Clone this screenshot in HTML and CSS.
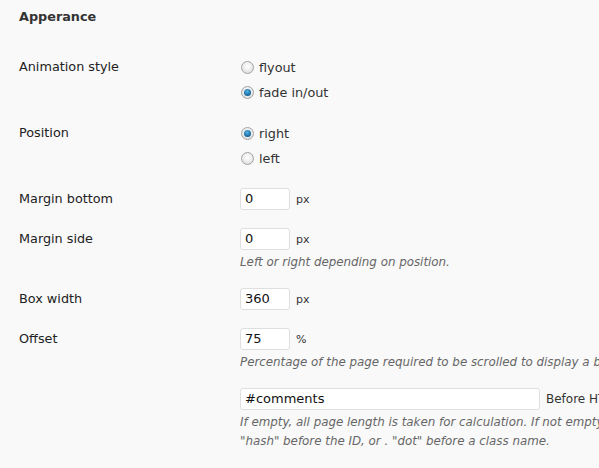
FILE: index.html
```html
<!DOCTYPE html>
<html>
<head>
<meta charset="utf-8">
<link rel="stylesheet" href="styles.css">
</head>
<body>
<div class="page">
  <h3 class="title">Apperance</h3>
  <div class="form">
    <div class="row row-radio">
      <div class="label">Animation style</div>
      <div class="field">
        <label class="radio-line"><span class="radio"></span>flyout</label>
        <label class="radio-line"><span class="radio checked"></span>fade in/out</label>
      </div>
    </div>
    <div class="row row-radio row-pos">
      <div class="label">Position</div>
      <div class="field">
        <label class="radio-line"><span class="radio checked"></span>right</label>
        <label class="radio-line"><span class="radio"></span>left</label>
      </div>
    </div>
    <div class="row row-mb">
      <div class="label">Margin bottom</div>
      <div class="field">
        <div class="input-line"><span class="input small">0</span><span class="unit">px</span></div>
      </div>
    </div>
    <div class="row">
      <div class="label">Margin side</div>
      <div class="field">
        <div class="input-line"><span class="input small">0</span><span class="unit">px</span></div>
        <p class="desc">Left or right depending on position.</p>
      </div>
    </div>
    <div class="row row-bw">
      <div class="label">Box width</div>
      <div class="field">
        <div class="input-line"><span class="input small">360</span><span class="unit">px</span></div>
      </div>
    </div>
    <div class="row">
      <div class="label">Offset</div>
      <div class="field">
        <div class="input-line"><span class="input small">75</span><span class="unit">%</span></div>
        <p class="desc nowrap">Percentage of the page required to be scrolled to display a box.</p>
      </div>
    </div>
    <div class="row row-last">
      <div class="label"></div>
      <div class="field">
        <div class="input-line"><span class="input wide">#comments</span><span class="unit after">Before HTML element.</span></div>
        <p class="desc nowrap">If empty, all page length is taken for calculation. If not empty, use # "hash"</p>
        <p class="desc desc2">"hash" before the ID, or . "dot" before a class name.</p>
      </div>
    </div>
  </div>
</div>
</body>
</html>
```
FILE: styles.css
```css
html, body {
  margin: 0;
  padding: 0;
  background: #f9f9f9;
  overflow: hidden;
}
body {
  width: 599px;
  height: 468px;
  font-family: "DejaVu Sans", Verdana, sans-serif;
  font-size: 12.8px;
  color: #333;
}
.page {
  padding: 0 0 0 19px;
}
.title {
  margin: 0;
  padding-top: 8px;
  height: 24px;
  line-height: 18px;
  font-size: 12.8px;
  font-weight: bold;
  color: #333;
}
.form {
  padding-top: 15px;
}
.row {
  display: flex;
  padding: 8px 0;
}
.row-pos {
  padding-top: 9px;
  padding-bottom: 9px;
}
.row-bw {
  padding-top: 7px;
}
.row-last {
  padding-top: 7px;
}
.label {
  width: 221px;
  flex: none;
  line-height: 24px;
  color: #222;
}
.field {
  flex: 1;
  min-width: 0;
  white-space: nowrap;
}
.radio-line {
  display: flex;
  align-items: center;
  height: 24px;
  color: #333;
}
.radio-line + .radio-line {
  margin-top: 1px;
}
.radio {
  flex: none;
  width: 11px;
  height: 11px;
  border: 1px solid #a3a3a3;
  border-radius: 50%;
  margin: 0 5px 0 1px;
  background: radial-gradient(circle at 50% 40%, #ffffff 0%, #f1f1f1 40%, #d4d4d4 100%);
  position: relative;
  box-sizing: content-box;
}
.radio.checked::after {
  content: "";
  position: absolute;
  left: 2px;
  top: 2px;
  width: 7px;
  height: 7px;
  border-radius: 50%;
  background: radial-gradient(circle at 45% 35%, #5ab4e6 0%, #1e73a8 55%, #0d4c78 100%);
}
.input-line {
  display: flex;
  align-items: center;
  height: 24px;
}
.input {
  display: block;
  flex: none;
  box-sizing: border-box;
  height: 22px;
  line-height: 20px;
  background: #fff;
  border: 1px solid #dfdfdf;
  border-radius: 3px;
  padding: 0 4px;
  font-size: 13px;
  color: #111;
}
.input.small {
  width: 50px;
}
.input.wide {
  width: 300px;
}
.unit {
  flex: none;
  margin-left: 6px;
  font-size: 11px;
  color: #333;
}
.unit.after {
  font-size: 12px;
}
.desc {
  margin: 1px 0 0;
  line-height: 20px;
  font-size: 11.85px;
  font-style: italic;
  color: #666;
}
.desc2 {
  margin-top: -1px;
}
.nowrap {
  white-space: nowrap;
}
```
